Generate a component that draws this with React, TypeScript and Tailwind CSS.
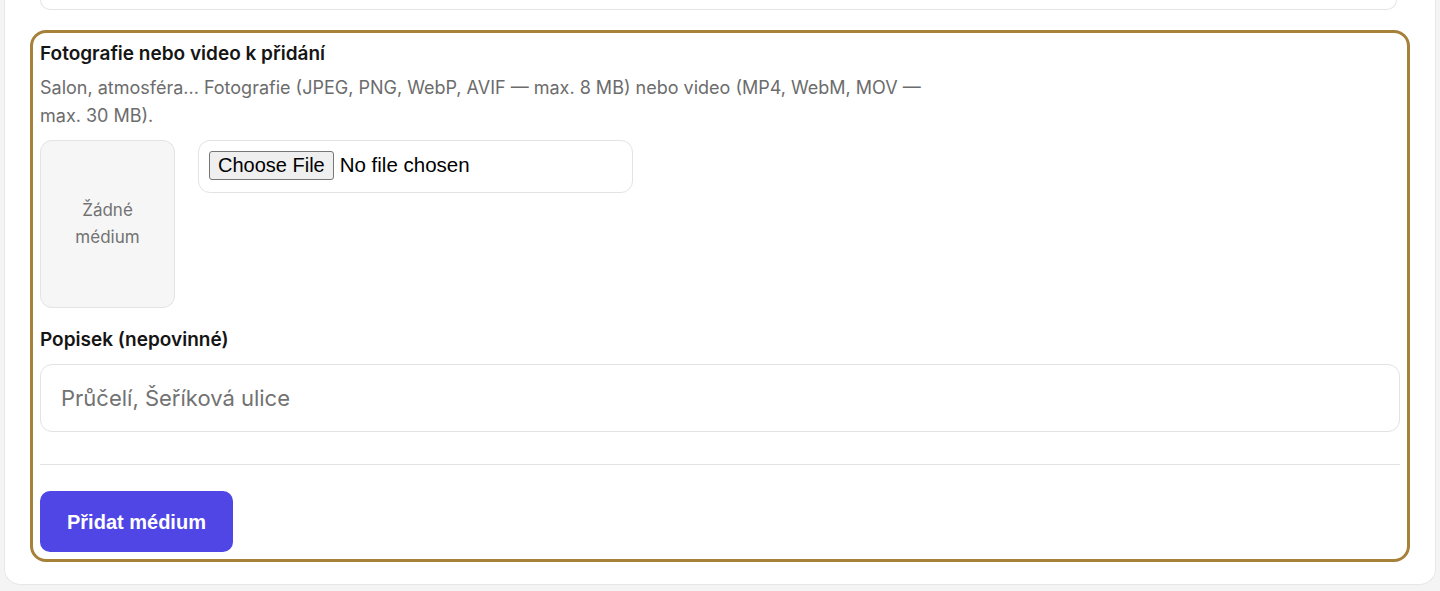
import React from 'react';

const inter = "font-['Inter','Noto_Sans',sans-serif]";

export default function App() {
    return (
        <div className="h-[591px] overflow-hidden bg-[#f4f4f4]">
            <div className="mx-[4px] bg-white border border-t-0 border-[#e7e7e7] rounded-b-[16px] px-[25px] pb-[22px]">
                {/* tail of the previous media card */}
                <div className="h-[10px] ml-[10px] mr-[13px] border border-t-0 border-[#e5e5e5] rounded-b-[14px] bg-white" />

                <MediaForm />
            </div>
        </div>
    );
}

function MediaForm() {
    return (
        <form className={`mt-[20px] border-[3px] border-[#a68139] rounded-[16px] px-[7px] pt-[9px] pb-[7px] ${inter}`}>
            <h3 className="text-[19px] leading-[24px] font-semibold text-[#151515]">Fotografie nebo video k přidání</h3>
            <p className="mt-[8px] max-w-[900px] text-[18px] leading-[28px] text-[#6c6c6c]">
                Salon, atmosféra... Fotografie (JPEG, PNG, WebP, AVIF — max. 8 MB) nebo video (MP4, WebM, MOV — max. 30 MB).
            </p>

            <div className="mt-[10px] flex items-start gap-[23px]">
                <div className="w-[135px] h-[168px] shrink-0 rounded-[12px] border border-[#e3e3e3] bg-[#f6f6f6] flex items-center justify-center text-center text-[17px] leading-[27px] text-[#727272]">
                    Žádné<br />médium
                </div>
                <input
                    type="file"
                    accept="image/jpeg,image/png,image/webp,image/avif,video/mp4,video/webm,video/quicktime"
                    className="w-[435px] h-[53px] rounded-[12px] border border-[#e3e3e3] px-[10px] pt-[10px] pb-[10px] font-['Liberation_Sans',Arial,sans-serif] text-[20.5px] leading-[23px] text-black file:h-[29px] file:mr-[6px] file:rounded-[3px] file:border file:border-[#767676] file:bg-[#efefef] file:px-[8px] file:text-[20px] file:text-black"
                />
            </div>

            <label className="mt-[20px] block text-[19px] leading-[24px] font-semibold text-[#151515]">Popisek (nepovinné)</label>
            <input
                type="text"
                placeholder="Průčelí, Šeříková ulice"
                className="mt-[12px] block w-full h-[68px] rounded-[12px] border border-[#e3e3e3] px-[20px] text-[22px] text-[#151515] placeholder:text-[#727272] outline-none"
            />

            <hr className="mt-[32px] border-[#e3e3e3]" />

            <button
                type="button"
                className="mt-[26px] h-[61px] rounded-[10px] bg-[#4f46e5] px-[27px] font-['Liberation_Sans',Arial,sans-serif] text-[20px] font-bold text-white"
            >
                Přidat médium
            </button>
        </form>
    );
}
